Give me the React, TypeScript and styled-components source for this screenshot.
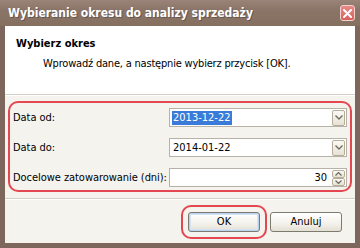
import React from "react";
import styled, { createGlobalStyle } from "styled-components";

const GlobalStyle = createGlobalStyle`
  html, body {
    margin: 0;
    padding: 0;
    background: #fff;
  }
  * {
    box-sizing: border-box;
  }
`;

const FONT = `"DejaVu Sans Condensed", "Liberation Sans", sans-serif`;

// Styled components
const Window = styled.div`
  width: 360px;
  height: 248px;
  display: flex;
  flex-direction: column;
  background: #7d665b;
  font-family: ${FONT};
  font-size: 11px;
  color: #000;
  overflow: hidden;
`;

const TitleBar = styled.div`
  height: 26px;
  flex: none;
  display: flex;
  align-items: center;
  padding: 0 5px 0 8px;
  background: linear-gradient(#9a8479, #8a7468 40%, #85705f);
`;

const Title = styled.span`
  flex: 1;
  color: #fff;
  font-weight: 700;
  font-size: 12px;
  text-shadow: 1px 1px 0 #6a564c;
`;

const CloseButton = styled.div`
  width: 15px;
  height: 16px;
  border-radius: 3px;
  border: 1px solid #f2d0cf;
  background: linear-gradient(#e88a86, #d9605c);
  display: flex;
  align-items: center;
  justify-content: center;
`;

const Body = styled.div`
  flex: 1;
  display: flex;
  flex-direction: column;
  margin: 0 5px 5px 5px;
  background: #f4f3ee;
`;

const Header = styled.div`
  height: 69px;
  flex: none;
  background: #fff;
  padding: 11px 0 0 11px;
  display: flex;
  flex-direction: column;
  gap: 6px;
  border-bottom: 1px solid #d4d0c8;
`;

const HeaderTitle = styled.div`
  font-weight: 700;
  font-size: 11px;
  line-height: 14px;
`;

const HeaderText = styled.div`
  padding-left: 27px;
  line-height: 13px;
  letter-spacing: -0.2px;
`;

const Content = styled.div`
  padding: 5px 3px 6px 3px;
  border-top: 1px solid #fff;
  border-bottom: 1px solid #d4d0c8;
`;

const Highlight = styled.div`
  border: 2px solid #e4474f;
  border-radius: 10px;
  padding: 5px 3px 3px 3px;
  display: grid;
  grid-template-columns: 156px 1fr;
  row-gap: 11px;
  align-items: center;
`;

const Label = styled.span`
  line-height: 19px;
  letter-spacing: -0.05px;
`;

const Field = styled.div<{ $align?: "left" | "right" }>`
  height: 19px;
  display: flex;
  align-items: center;
  justify-content: ${({ $align }) => ($align === "right" ? "flex-end" : "space-between")};
  gap: 4px;
  border: 1px solid #b7b2a7;
  background: #fff;
  padding: 0 1px 0 2px;
`;

const Selected = styled.span`
  background: #3a7bd9;
  color: #fff;
  padding: 0 1px;
  line-height: 14px;
`;

const Value = styled.span`
  padding: 0 1px;
`;

const SmallButton = styled.div<{ $h: number }>`
  width: 13px;
  height: ${({ $h }) => $h}px;
  border: 1px solid #b8ad99;
  border-radius: 2px;
  background: linear-gradient(#fbfaf6, #e6e1d4);
  display: flex;
  align-items: center;
  justify-content: center;
`;

const Spinner = styled.div`
  display: flex;
  flex-direction: column;
`;

const Footer = styled.div`
  flex: 1;
  display: flex;
  align-items: center;
  justify-content: flex-end;
  gap: 3px;
  padding: 0 13px 0 0;
  border-top: 1px solid #fff;
`;

const FocusRing = styled.div`
  border: 2px solid #e4474f;
  border-radius: 10px;
  padding: 5px;
`;

const Button = styled.div<{ $focused?: boolean }>`
  width: 72px;
  height: 20px;
  display: flex;
  align-items: center;
  justify-content: center;
  border: 1px solid #7d7a6f;
  border-radius: 3px;
  background: linear-gradient(#ffffff, #f3f1ea 60%, #e2dfd3);
  box-shadow: ${({ $focused }) =>
    $focused ? "inset 0 0 0 1px #b9d1ef, inset 0 0 0 2px #d6e4f5" : "none"};
`;

const Chevron = ({ up }: { up?: boolean }) => (
  <svg width="7" height="4" viewBox="0 0 7 4">
    <path
      d={up ? "M0.5 3.5 L3.5 0.5 L6.5 3.5" : "M0.5 0.5 L3.5 3.5 L6.5 0.5"}
      fill="none"
      stroke="#6e6a5e"
      strokeWidth="1.2"
    />
  </svg>
);

const Dropdown = () => (
  <SmallButton $h={16}>
    <svg width="8" height="5" viewBox="0 0 8 5">
      <path d="M0.5 0.5 L4 4 L7.5 0.5" fill="none" stroke="#6e6a5e" strokeWidth="1.3" />
    </svg>
  </SmallButton>
);

export default function App() {
  return (
    <>
      <GlobalStyle />
      <Window>
        <TitleBar>
          <Title>Wybieranie okresu do analizy sprzedaży</Title>
          <CloseButton>
            <svg width="9" height="9" viewBox="0 0 9 9">
              <path d="M1 1 L8 8 M8 1 L1 8" stroke="#fff" strokeWidth="2" strokeLinecap="round" />
            </svg>
          </CloseButton>
        </TitleBar>
        <Body>
          <Header>
            <HeaderTitle>Wybierz okres</HeaderTitle>
            <HeaderText>Wprowadź dane, a następnie wybierz przycisk [OK].</HeaderText>
          </Header>
          <Content>
            <Highlight>
              <Label>Data od:</Label>
              <Field>
                <Selected>2013-12-22</Selected>
                <Dropdown />
              </Field>
              <Label>Data do:</Label>
              <Field>
                <Value>2014-01-22</Value>
                <Dropdown />
              </Field>
              <Label>Docelowe zatowarowanie (dni):</Label>
              <Field $align="right">
                <Value>30</Value>
                <Spinner>
                  <SmallButton $h={8}>
                    <Chevron up />
                  </SmallButton>
                  <SmallButton $h={8}>
                    <Chevron />
                  </SmallButton>
                </Spinner>
              </Field>
            </Highlight>
          </Content>
          <Footer>
            <FocusRing>
              <Button $focused>OK</Button>
            </FocusRing>
            <Button>Anuluj</Button>
          </Footer>
        </Body>
      </Window>
    </>
  );
}
